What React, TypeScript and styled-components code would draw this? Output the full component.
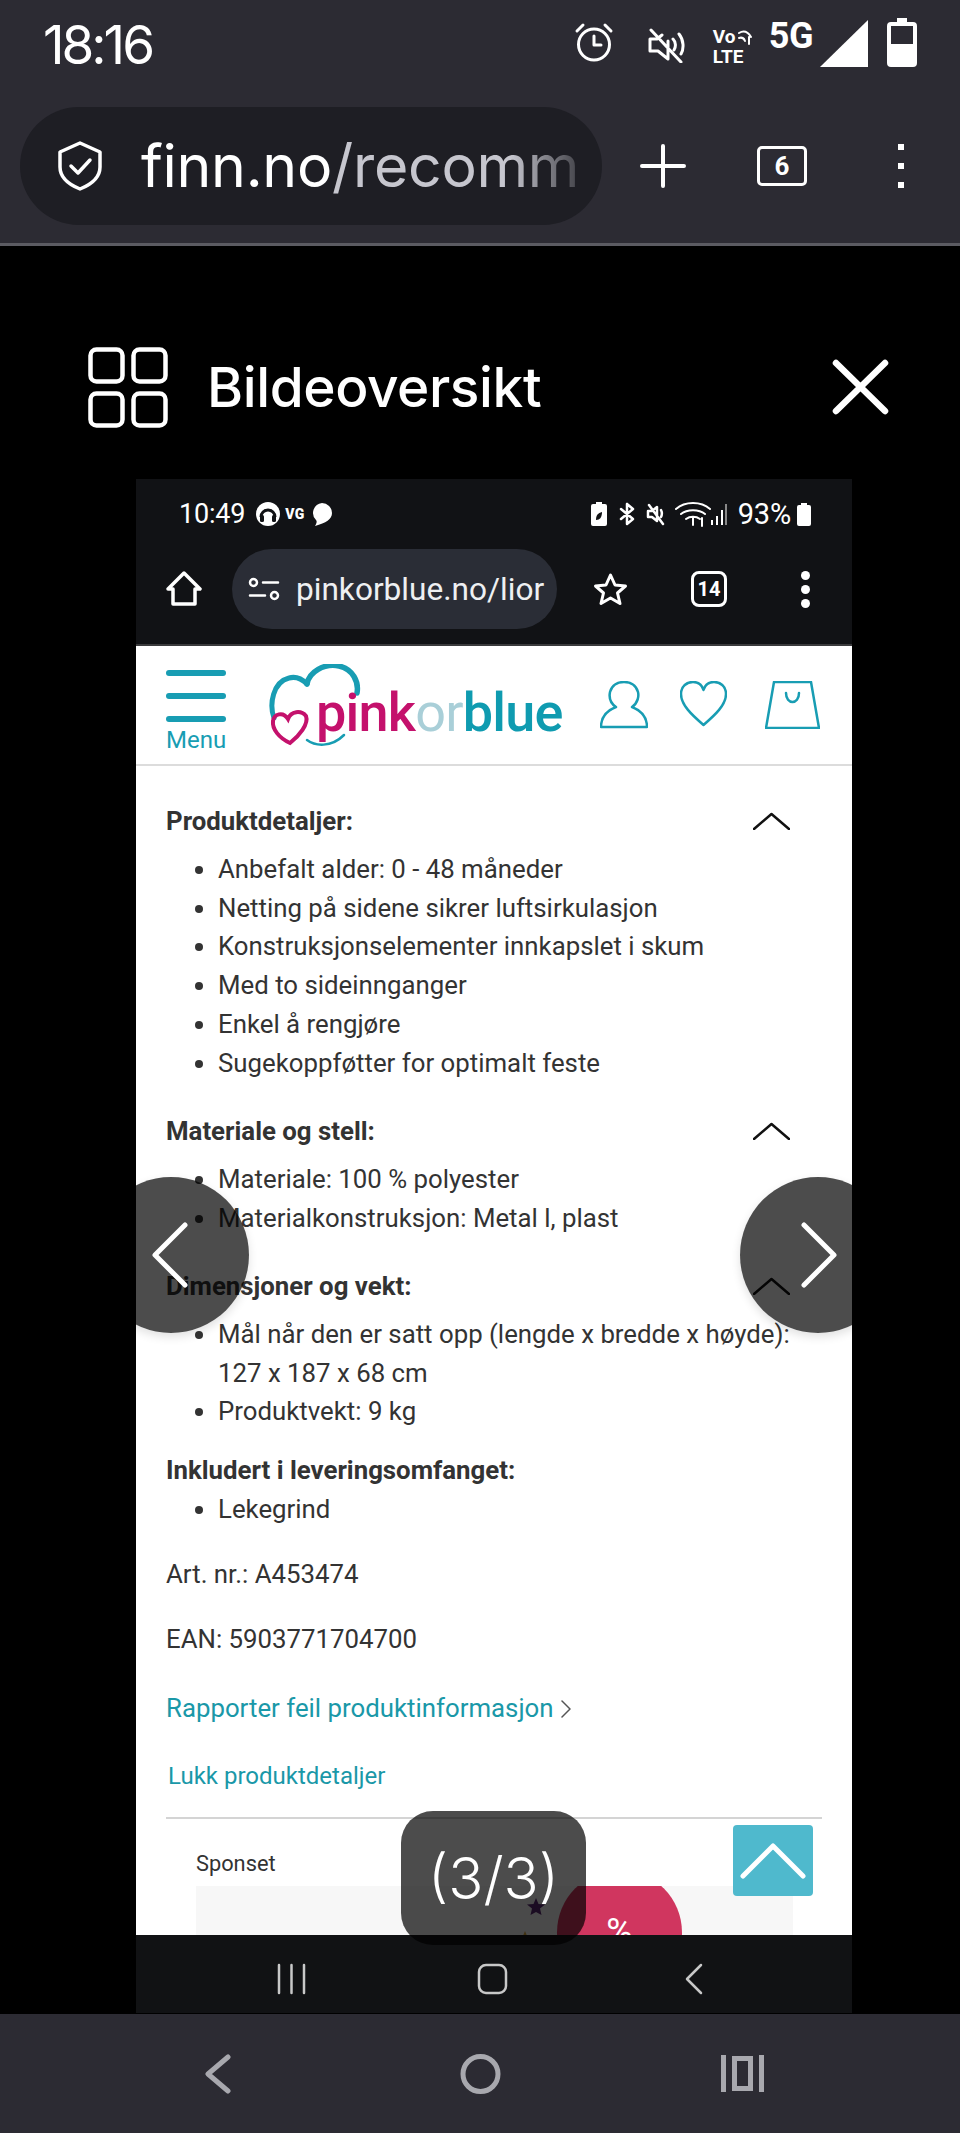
import React from "react";
import styled, { createGlobalStyle } from "styled-components";

const Global = createGlobalStyle`
  html, body { margin: 0; padding: 0; background: #000; }
  * { box-sizing: border-box; }
`;

const Page = styled.div`
  width: 960px;
  height: 2133px;
  display: flex;
  flex-direction: column;
  background: #000;
  font-family: Roboto, "Liberation Sans", sans-serif;
  overflow: hidden;
`;

const Chrome = styled.header`
  height: 246px;
  flex: none;
  background: #2c2b33;
  border-bottom: 3px solid #5b5b62;
  color: #fff;
`;

const StatusRow = styled.div`
  height: 107px;
  padding: 18px 43px 0;
  display: flex;
  align-items: flex-start;
`;

const Clock = styled.div`
  font-family: Inter, Roboto, sans-serif;
  font-size: 53px;
  line-height: 54px;
  letter-spacing: -3px;
  font-weight: 400;
  width: 532px;
`;

const Slot = styled.span<{ $ml?: number; $mt?: number }>`
  display: flex;
  flex: none;
  margin-left: ${(p) => p.$ml ?? 0}px;
  margin-top: ${(p) => p.$mt ?? 0}px;
`;

const VoLte = styled.span`
  display: flex;
  flex-direction: column;
  font-size: 19px;
  font-weight: 700;
  line-height: 20px;
  width: 42px;
`;

const VoRow = styled.span`
  display: flex;
  align-items: center;
  gap: 2px;
`;

const FiveG = styled.span`
  font-size: 36px;
  font-weight: 700;
  line-height: 32px;
  letter-spacing: -0.5px;
`;

const UrlRow = styled.div`
  height: 118px;
  padding-left: 20px;
  display: flex;
  align-items: center;
`;

const UrlPill = styled.div`
  width: 582px;
  height: 118px;
  border-radius: 59px;
  background: #1e1e24;
  display: flex;
  align-items: center;
  padding-left: 37px;
  gap: 38px;
  flex: none;
`;

const UrlText = styled.div`
  font-family: Inter, Roboto, sans-serif;
  font-size: 59px;
  line-height: 70px;
  letter-spacing: -0.3px;
  width: 440px;
  white-space: nowrap;
  -webkit-mask-image: linear-gradient(90deg, #000 84%, rgba(0,0,0,0.2) 100%);
  mask-image: linear-gradient(90deg, #000 84%, rgba(0,0,0,0.2) 100%);
`;

const UrlPath = styled.span`
  color: #c6c6ce;
`;

const TabBox = styled.span<{ $w: number; $h: number; $fs: number; $bw: number; $r: number }>`
  width: ${(p) => p.$w}px;
  height: ${(p) => p.$h}px;
  border: ${(p) => p.$bw}px solid #fff;
  border-radius: ${(p) => p.$r}px;
  font-size: ${(p) => p.$fs}px;
  font-weight: 700;
  color: #fff;
  display: flex;
  align-items: center;
  justify-content: center;
  flex: none;
`;

const Stage = styled.main`
  flex: 1;
  display: flex;
  flex-direction: column;
  min-height: 0;
`;

const ViewerHead = styled.div`
  height: 233px;
  flex: none;
  display: flex;
  align-items: center;
  padding: 49px 71px 0 88px;
  color: #fff;
`;

const ViewerTitle = styled.h1`
  margin: 0 0 0 39px;
  flex: 1;
  font-family: Inter, Roboto, sans-serif;
  font-size: 55px;
  font-weight: 500;
  line-height: 60px;
  letter-spacing: -0.4px;
`;

const Shot = styled.section`
  position: relative;
  width: 716px;
  margin-left: 136px;
  height: 1534px;
  flex: none;
  display: flex;
  flex-direction: column;
`;

const PhoneTop = styled.div`
  height: 167px;
  flex: none;
  background: #111215;
  border-bottom: 2px solid #3a3a3c;
  color: #fff;
`;

const PhoneStatus = styled.div`
  height: 70px;
  padding: 0 41px 0 43px;
  display: flex;
  align-items: center;
`;

const PhoneClock = styled.span`
  font-size: 27px;
  letter-spacing: -0.2px;
  margin-right: 11px;
`;

const Vg = styled.span`
  font-size: 14px;
  font-weight: 900;
  margin: 0 6px 0 5px;
  letter-spacing: 0.4px;
`;

const Grow = styled.span`
  flex: 1;
`;

const PhonePct = styled.span`
  font-size: 29px;
  margin: 0 6px 0 11px;
  letter-spacing: -0.2px;
`;

const PhoneBar = styled.div`
  height: 80px;
  display: flex;
  align-items: center;
  padding-left: 30px;
`;

const PhonePill = styled.div`
  width: 325px;
  height: 80px;
  border-radius: 40px;
  background: #2a2d36;
  margin-left: 30px;
  padding-left: 16px;
  gap: 16px;
  display: flex;
  align-items: center;
  flex: none;
`;

const PhoneUrl = styled.span`
  font-size: 31.6px;
  width: 248px;
  white-space: nowrap;
  color: #eef0f2;
`;

const SiteHeader = styled.div`
  height: 120px;
  flex: none;
  background: #fff;
  border-bottom: 2px solid #dcdcdc;
  display: flex;
  align-items: flex-start;
  padding: 17px 0 0 30px;
`;

const MenuCol = styled.div`
  width: 60px;
  flex: none;
  display: flex;
  flex-direction: column;
  margin-top: 7px;
`;

const MenuBar = styled.span`
  height: 6px;
  border-radius: 3px;
  background: #189db3;
  margin-bottom: 17px;
`;

const MenuLabel = styled.span`
  font-size: 24px;
  line-height: 26px;
  color: #189db3;
  text-align: center;
  margin-top: -12px;
`;

const Logo = styled.div`
  position: relative;
  width: 291px;
  height: 84px;
  margin: 1px 0 0 43px;
  flex: none;
`;

const LogoArt = styled.svg`
  position: absolute;
  left: 0;
  top: 0;
`;

const LogoWord = styled.div`
  position: absolute;
  left: 47px;
  top: 20px;
  font-family: Roboto, sans-serif;
  font-size: 54px;
  line-height: 58px;
  font-weight: 500;
  letter-spacing: -0.8px;
  white-space: nowrap;
`;

const LogoPart = styled.span<{ $c: string; $w?: number }>`
  color: ${(p) => p.$c};
  font-weight: ${(p) => p.$w ?? 500};
`;

const SiteIcon = styled.span<{ $ml: number }>`
  margin: 18px 0 0 ${(p) => p.$ml}px;
  display: flex;
  flex: none;
`;

const Body = styled.div`
  height: 1169px;
  flex: none;
  overflow: hidden;
  background: #fff;
  padding: 36px 30px 0;
  color: #333;
  font-size: 25.8px;
  line-height: 38.8px;
`;

const Group = styled.div<{ $mb: number }>`
  margin-bottom: ${(p) => p.$mb}px;
`;

const GroupHead = styled.div<{ $mb?: number }>`
  display: flex;
  align-items: center;
  justify-content: space-between;
  font-weight: 700;
  padding-right: 32px;
  margin-bottom: ${(p) => p.$mb ?? 9}px;
`;

const List = styled.ul`
  margin: 0;
  padding: 0 0 0 52px;
  list-style: disc;
`;

const Para = styled.p<{ $mb: number }>`
  margin: 0 0 ${(p) => p.$mb}px;
`;

const LinkLine = styled.div<{ $fs: number; $ml?: number; $mb: number }>`
  display: flex;
  align-items: center;
  gap: 7px;
  color: #1a98a8;
  font-size: ${(p) => p.$fs}px;
  margin: 0 0 ${(p) => p.$mb}px ${(p) => p.$ml ?? 0}px;
`;

const Rule = styled.div`
  height: 2px;
  background: #d4d4d4;
`;

const Sponsored = styled.div`
  padding: 23px 0 0 30px;
`;

const SponsoredLabel = styled.div`
  font-size: 21.8px;
  line-height: 44px;
  color: #333;
`;

const AdBox = styled.div`
  position: relative;
  width: 597px;
  height: 100px;
  background: #f7f7f7;
  overflow: hidden;
`;

const SaleDisc = styled.div`
  position: absolute;
  left: 361px;
  top: -16px;
  width: 125px;
  height: 125px;
  border-radius: 50%;
  background: #d0365f;
  color: #fff;
  font-size: 36px;
  text-align: center;
  padding-top: 42px;
  line-height: 40px;
`;

const AdStar = styled.svg<{ $x: number; $y: number }>`
  position: absolute;
  left: ${(p) => p.$x}px;
  top: ${(p) => p.$y}px;
`;

const PhoneNav = styled.div`
  height: 78px;
  flex: none;
  background: #111214;
  display: flex;
  align-items: center;
  padding: 10px 0 0 141px;
`;

const NavSlot = styled.span<{ $ml: number }>`
  display: flex;
  margin-left: ${(p) => p.$ml}px;
`;

const ArrowDisc = styled.div<{ $side: "left" | "right" }>`
  position: absolute;
  top: 698px;
  ${(p) => (p.$side === "left" ? "left: -43px; padding-left: 59px;" : "left: 604px; padding-left: 61px;")}
  width: 156px;
  height: 156px;
  border-radius: 50%;
  background: rgba(0, 0, 0, 0.7);
  box-shadow: 0 4px 10px rgba(0, 0, 0, 0.12);
  display: flex;
  align-items: center;
`;

const Counter = styled.div`
  position: absolute;
  left: 265px;
  top: 1332px;
  width: 185px;
  height: 134px;
  border-radius: 32px;
  background: rgba(0, 0, 0, 0.7);
  color: #fff;
  font-family: Inter, Roboto, sans-serif;
  font-size: 58px;
  font-weight: 300;
  display: flex;
  align-items: center;
  justify-content: center;
`;

const ScrollTop = styled.div`
  position: absolute;
  left: 597px;
  top: 1346px;
  width: 80px;
  height: 71px;
  border-radius: 4px;
  background: #4fb9cd;
  display: flex;
  align-items: center;
  justify-content: center;
`;

const BottomBar = styled.footer`
  flex: none;
  height: 119px;
  background: #2c2b33;
  display: flex;
  align-items: center;
  padding-left: 204px;
`;

const Stroke = ({ w, h, sw = 3, c = "#fff", d }: { w: number; h: number; sw?: number; c?: string; d: string }) => (
  <svg width={w} height={h} viewBox={`0 0 ${w} ${h}`} fill="none" stroke={c} strokeWidth={sw} strokeLinecap="round" strokeLinejoin="round">
    <path d={d} />
  </svg>
);

const Chevron = () => <Stroke w={37} h={18} sw={2.5} c="#111" d="M1 17 L18.5 2 L36 17" />;

const Dots = ({ r, gap, square }: { r: number; gap: number; square?: boolean }) => (
  <svg width={r * 2} height={gap * 2 + r * 2} fill="#fff">
    {[0, 1, 2].map((i) =>
      square ? (
        <rect key={i} x={0} y={i * gap} width={r * 2} height={r * 2} />
      ) : (
        <circle key={i} cx={r} cy={r + i * gap} r={r} />
      )
    )}
  </svg>
);

const Star = "M9 0l2.500 6 6.500.5-5 4 1.500 6.500L9 14l-5.500 3L5 10.500 0 6.500 6.500 6z";

export default function App() {
  return (
    <Page>
      <Global />
      <Chrome>
        <StatusRow>
          <Clock>18:16</Clock>
          <Slot $mt={4}>
            <Stroke w={40} h={40} sw={3} d="M20 7a15.500 15.500 0 1 0 0 31a15.500 15.500 0 1 0 0-31M20 14v9h7M3 9l6-6M37 9l-6-6" />
          </Slot>
          <Slot $ml={33} $mt={9}>
            <Stroke w={40} h={36} sw={3} d="M3 12h7l5-4M21 14v18l-10-8H3V12M26 12c3 3 3 8 1 11M32 7c5 6 5 15 2 20M4 3l30 32" />
          </Slot>
          <Slot $ml={26} $mt={9}>
            <VoLte>
              <VoRow>
                Vo
                <Stroke w={14} h={16} sw={2} d="M1 4c5-3 9-1 12 4M1 9c3-1 5 0 6 3M11 8v7" />
              </VoRow>
              <span>LTE</span>
            </VoLte>
          </Slot>
          <Slot $ml={14} $mt={2}>
            <FiveG>5G</FiveG>
          </Slot>
          <Slot $ml={7} $mt={2}>
            <svg width="48" height="47" fill="#fff"><path d="M48 0V47H0Z" /></svg>
          </Slot>
          <Slot $ml={19}>
            <svg width="30" height="49" fill="#fff">
              <path d="M10 0h10v4h6a4 4 0 0 1 4 4v37a4 4 0 0 1-4 4H4a4 4 0 0 1-4-4V8a4 4 0 0 1 4-4h6z" />
              <rect x="4" y="8" width="22" height="18" fill="#2c2b33" />
            </svg>
          </Slot>
        </StatusRow>
        <UrlRow>
          <UrlPill>
            <Stroke w={46} h={50} sw={3.5} d="M23 2 L43 11 V26 C43 37 33 44 23 48 C13 44 3 37 3 26 V11 Z M14 25 L21 32 L33 19" />
            <UrlText>
              finn.no<UrlPath>/recomm</UrlPath>
            </UrlText>
          </UrlPill>
          <Slot $ml={38}>
            <Stroke w={46} h={44} sw={4} d="M23 2V42M2 22H44" />
          </Slot>
          <Slot $ml={71}>
            <TabBox $w={50} $h={40} $fs={26} $bw={3} $r={5}>6</TabBox>
          </Slot>
          <Slot $ml={91}>
            <Dots r={3} gap={19} square />
          </Slot>
        </UrlRow>
      </Chrome>
      <Stage>
        <ViewerHead>
          <svg width="80" height="81" fill="none" stroke="#fff" strokeWidth="4.5">
            <rect x="2.5" y="2.5" width="32" height="32" rx="6" />
            <rect x="45.5" y="2.5" width="32" height="32" rx="6" />
            <rect x="2.5" y="46.5" width="32" height="32" rx="6" />
            <rect x="45.5" y="46.5" width="32" height="32" rx="6" />
          </svg>
          <ViewerTitle>Bildeoversikt</ViewerTitle>
          <Stroke w={57} h={56} sw={6.5} d="M4 4L53 52M53 4L4 52" />
        </ViewerHead>
        <Shot>
          <PhoneTop>
            <PhoneStatus>
              <PhoneClock>10:49</PhoneClock>
              <svg width="24" height="24">
                <circle cx="12" cy="12" r="12" fill="#fff" />
                <path d="M5 15a7 7 0 0 1 14 0" fill="none" stroke="#111215" strokeWidth="3" />
                <rect x="4" y="13" width="4" height="7" rx="1.5" fill="#111215" />
                <rect x="16" y="13" width="4" height="7" rx="1.5" fill="#111215" />
              </svg>
              <Vg>VG</Vg>
              <svg width="21" height="23" fill="#fff"><path d="M11 0a10 10 0 0 1 10 10c0 6-6 10-17 13c2-3 2-5 1-6A10 10 0 0 1 11 0z" /></svg>
              <Grow />
              <svg width="16" height="24" fill="#fff"><path d="M5 0h6v2h3a2 2 0 0 1 2 2v18a2 2 0 0 1-2 2H2a2 2 0 0 1-2-2V4a2 2 0 0 1 2-2h3z" /><path d="M5 18c0-5 2-7 6-8c0 5-2 8-6 8z" fill="#111215" /></svg>
              <Slot $ml={11}><Stroke w={18} h={24} sw={2.5} d="M9 2V22L15 17L3 7M9 2L15 7L3 17" /></Slot>
              <Slot $ml={10}><Stroke w={20} h={24} sw={2.5} d="M2 9h4l5-4v14l-5-4H2zM15 8c1 2 1 5 0 7M3 3l14 19" /></Slot>
              <Slot $ml={8}><Stroke w={38} h={26} sw={2} d="M2 8c9-8 25-8 34 0M7 13c6-5 18-5 24 0M12 18c4-3 10-3 14 0M19 16v8M28 17v8" /></Slot>
              <Slot $ml={-1}>
                <svg width="16" height="24" fill="#fff">
                  <rect x="0" y="18" width="2" height="5" />
                  <rect x="5" y="14" width="2" height="9" />
                  <rect x="10" y="8" width="2" height="15" />
                  <rect x="14" y="2" width="2" height="21" fill="#888" />
                </svg>
              </Slot>
              <PhonePct>93%</PhonePct>
              <svg width="14" height="23" fill="#fff"><path d="M4 0h6v2h2a2 2 0 0 1 2 2v17a2 2 0 0 1-2 2H2a2 2 0 0 1-2-2V4a2 2 0 0 1 2-2h2z" /></svg>
            </PhoneStatus>
            <PhoneBar>
              <Stroke w={36} h={36} sw={3.5} d="M18 2L34 18H29V33H7V18H2Z" />
              <PhonePill>
                <Stroke w={32} h={24} sw={2.5} d="M2 5.500a3.500 3.500 0 1 0 7 0a3.500 3.500 0 1 0-7 0M15 5.500H30M23 18.500a3.500 3.500 0 1 0 7 0a3.500 3.500 0 1 0-7 0M2 18.500H17" />
                <PhoneUrl>pinkorblue.no/lior</PhoneUrl>
              </PhonePill>
              <Slot $ml={36}>
                <Stroke w={35} h={34} sw={3} d="M17.500 3L22 13L32.500 14L24.500 21L27 31.500L17.500 26L8 31.500L10.500 21L2.500 14L13 13Z" />
              </Slot>
              <Slot $ml={63}>
                <TabBox $w={36} $h={36} $fs={20} $bw={3} $r={8}>14</TabBox>
              </Slot>
              <Slot $ml={74}>
                <Dots r={4.5} gap={14} />
              </Slot>
            </PhoneBar>
          </PhoneTop>
          <SiteHeader>
            <MenuCol>
              <MenuBar />
              <MenuBar />
              <MenuBar />
              <MenuLabel>Menu</MenuLabel>
            </MenuCol>
            <Logo>
              <LogoArt width="100" height="84" fill="none" strokeLinecap="round">
                <path d="M5 54C0 40 4 18 20 14C27 12 33 15 38 20" stroke="#189db3" strokeWidth="5" />
                <path d="M38 20C40 8 55 -1 70 2C84 5 90 18 88 29" stroke="#189db3" strokeWidth="5.5" />
                <path d="M38 76C46 82 62 84 75 71" stroke="#189db3" strokeWidth="2.5" />
                <path d="M21 79C10 74 3 65 4 57C5 50 14 47 19 55C22 47 32 46 37 52C40 60 30 72 21 79Z" stroke="#c4116c" strokeWidth="4" />
              </LogoArt>
              <LogoWord>
                <LogoPart $c="#c4116c">pink</LogoPart>
                <LogoPart $c="#a9cfd8" $w={400}>or</LogoPart>
                <LogoPart $c="#0f9bb0">blue</LogoPart>
              </LogoWord>
            </Logo>
            <SiteIcon $ml={40}>
              <Stroke w={48} h={48} sw={2.5} c="#189db3" d="M1 46H47C47 36 42 30 32 26C38 22 39 15 38 11C36 4 30 1 24 1C18 1 12 4 10 11C9 16 10 22 16 26C6 30 1 36 1 46Z" />
            </SiteIcon>
            <SiteIcon $ml={32}>
              <Stroke w={47} h={46} sw={2.5} c="#189db3" d="M23.500 44C12 34 1 24 1 13C1 5 7 1 13 1C18 1 22 4 23.500 9C25 4 29 1 34 1C40 1 46 5 46 13C46 24 35 34 23.500 44Z" />
            </SiteIcon>
            <SiteIcon $ml={38}>
              <Stroke w={55} h={48} sw={2.5} c="#189db3" d="M9 1H46L54 47H1ZM21 12C21 24 34 24 34 12" />
            </SiteIcon>
          </SiteHeader>
          <Body>
            <Group $mb={29}>
              <GroupHead>
                <span>Produktdetaljer:</span>
                <Chevron />
              </GroupHead>
              <List>
                <li>Anbefalt alder: 0 - 48 måneder</li>
                <li>Netting på sidene sikrer luftsirkulasjon</li>
                <li>Konstruksjonselementer innkapslet i skum</li>
                <li>Med to sideinnganger</li>
                <li>Enkel å rengjøre</li>
                <li>Sugekoppføtter for optimalt feste</li>
              </List>
            </Group>
            <Group $mb={29}>
              <GroupHead $mb={10}>
                <span>Materiale og stell:</span>
                <Chevron />
              </GroupHead>
              <List>
                <li>Materiale: 100 % polyester</li>
                <li>Materialkonstruksjon: Metal l, plast</li>
              </List>
            </Group>
            <Group $mb={20}>
              <GroupHead>
                <span>Dimensjoner og vekt:</span>
                <Chevron />
              </GroupHead>
              <List>
                <li>Mål når den er satt opp (lengde x bredde x høyde): 127 x 187 x 68 cm</li>
                <li>Produktvekt: 9 kg</li>
              </List>
            </Group>
            <Group $mb={26}>
              <GroupHead $mb={0}>
                <span>Inkludert i leveringsomfanget:</span>
              </GroupHead>
              <List>
                <li>Lekegrind</li>
              </List>
            </Group>
            <Para $mb={26}>Art. nr.: A453474</Para>
            <Para $mb={31}>EAN: 5903771704700</Para>
            <LinkLine $fs={25.8} $mb={29}>
              Rapporter feil produktinformasjon
              <Stroke w={10} h={18} sw={1.5} c="#555" d="M1 1L9 9L1 17" />
            </LinkLine>
            <LinkLine $fs={24} $ml={2} $mb={21}>Lukk produktdetaljer</LinkLine>
            <Rule />
            <Sponsored>
              <SponsoredLabel>Sponset</SponsoredLabel>
              <AdBox>
                <AdStar $x={331} $y={12} width="18" height="18" fill="#5c2a74">
                  <path d={Star} />
                </AdStar>
                <AdStar $x={320} $y={45} width="18" height="18" fill="#d8a43a">
                  <path d={Star} />
                </AdStar>
                <SaleDisc>%</SaleDisc>
              </AdBox>
            </Sponsored>
          </Body>
          <PhoneNav>
            <NavSlot $ml={0}>
              <Stroke w={29} h={32} sw={2.5} c="#c8c8c8" d="M2 2V30M14.500 2V30M27 2V30" />
            </NavSlot>
            <NavSlot $ml={171}>
              <Stroke w={31} h={32} sw={2.500} c="#c8c8c8" d="M9 2H22A7 7 0 0 1 29 9V23A7 7 0 0 1 22 30H9A7 7 0 0 1 2 23V9A7 7 0 0 1 9 2Z" />
            </NavSlot>
            <NavSlot $ml={177}>
              <Stroke w={18} h={32} sw={2.500} c="#c8c8c8" d="M16 2L2 16L16 30" />
            </NavSlot>
          </PhoneNav>
          <ArrowDisc $side="left">
            <Stroke w={36} h={66} sw={5} d="M33 3L3 33L33 63" />
          </ArrowDisc>
          <ArrowDisc $side="right">
            <Stroke w={36} h={66} sw={5} d="M3 3L33 33L3 63" />
          </ArrowDisc>
          <Counter>(3/3)</Counter>
          <ScrollTop>
            <Stroke w={66} h={36} sw={5} d="M3 33L33 3L63 33" />
          </ScrollTop>
        </Shot>
      </Stage>
      <BottomBar>
        <Stroke w={27} h={40} sw={5} c="#a8a8ae" d="M24 3L4 20L24 37" />
        <Slot $ml={229}>
          <svg width="41" height="40" fill="none" stroke="#a8a8ae" strokeWidth="5">
            <ellipse cx="20.500" cy="20" rx="17.500" ry="17.500" />
          </svg>
        </Slot>
        <Slot $ml={220}>
          <svg width="43" height="37" fill="#a8a8ae">
            <rect x="0" y="0" width="5" height="37" />
            <rect x="38" y="0" width="5" height="37" />
            <path d="M11 1H32V36H11ZM16 6V31H27V6Z" fillRule="evenodd" />
          </svg>
        </Slot>
      </BottomBar>
    </Page>
  );
}
